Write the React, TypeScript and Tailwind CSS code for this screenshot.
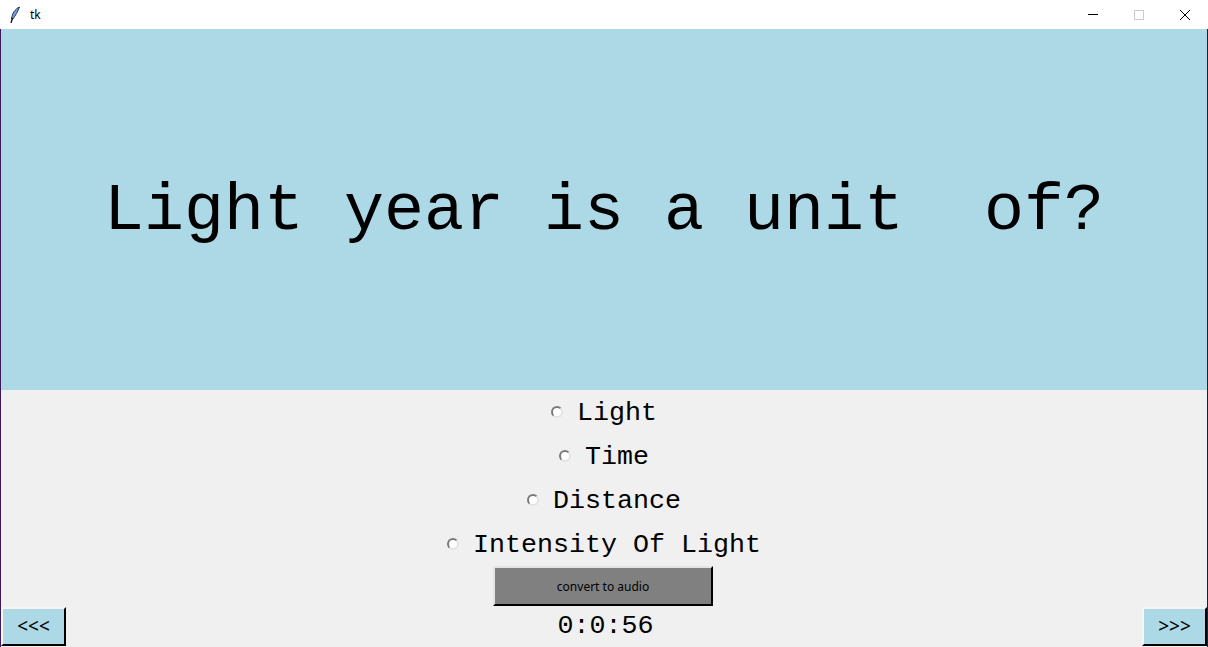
import React from 'react'

const mono = { fontFamily: '"Liberation Mono", "Courier New", monospace' }
const ui = { fontFamily: '"Noto Sans", Arial, sans-serif' }

function Radio() {
  return (
    <span className="inline-block w-[12px] h-[12px] rounded-full bg-white border-2 border-t-[#7a7a7a] border-l-[#7a7a7a] border-r-[#e3e3e3] border-b-[#e3e3e3]" />
  )
}

function Option({ label }: { label: string }) {
  return (
    <div className="h-[44px] flex items-center justify-center gap-[14px]">
      <Radio />
      <span className="text-[26.67px] text-black leading-none mt-[2px]" style={mono}>
        {label}
      </span>
    </div>
  )
}

export default function App() {
  const options = ['Light', 'Time', 'Distance', 'Intensity Of Light']
  return (
    <div className="w-[1208px] h-[647px] flex flex-col overflow-hidden bg-[#f0f0f0]">
      {/* title bar */}
      <div className="h-[29px] bg-white flex items-center shrink-0">
        <svg width="12" height="18" viewBox="0 0 12 18" className="ml-[9px]">
          <path d="M10.5 1 C6 3 3 7.5 2.5 13 L4 13 C6 10 9 5.5 10.5 1 Z" fill="#6fa0dc" stroke="#1a2a4a" strokeWidth="0.9" />
          <path d="M3.5 12 L2 17" stroke="#111" strokeWidth="1.3" />
        </svg>
        <span className="ml-[9px] text-[12px] text-black" style={ui}>
          tk
        </span>
        <div className="ml-auto flex items-center h-full">
          <div className="w-[46px] h-full flex items-center justify-center">
            <div className="w-[10px] h-px bg-black" />
          </div>
          <div className="w-[46px] h-full flex items-center justify-center">
            <div className="w-[10px] h-[10px] border border-[#cccccc]" />
          </div>
          <div className="w-[46px] h-full flex items-center justify-center">
            <svg width="12" height="12" viewBox="0 0 12 12">
              <path d="M1 1 L11 11 M11 1 L1 11" stroke="#000" strokeWidth="1" />
            </svg>
          </div>
        </div>
      </div>

      {/* window body */}
      <div className="flex-1 flex flex-col border-l border-l-[#3b1a5a] border-r border-r-[#1f1f2a]">
        <div className="h-[361px] bg-[#add8e6] flex items-center justify-center shrink-0">
          <span className="text-[66.67px] text-black leading-none whitespace-pre mt-[4px]" style={mono}>
            Light year is a unit  of?
          </span>
        </div>

        <div className="flex-1 flex flex-col">
          {options.map((o) => (
            <Option key={o} label={o} />
          ))}

          <div className="flex justify-center">
            <button
              className="w-[220px] h-[40px] bg-[#808080] text-[12px] text-black border-2 border-t-[#e3e3e3] border-l-[#e3e3e3] border-r-[#000] border-b-[#000] ml-[-2px] pt-[2px]"
              style={ui}
            >
              convert to audio
            </button>
          </div>

          <div className="flex-1 flex items-end justify-between">
            <button
              className="w-[65px] h-[39px] bg-[#add8e6] text-[19px] text-black border-2 border-t-[#f5f5f5] border-l-[#f5f5f5] border-r-[#000] border-b-[#000] mb-px"
              style={ui}
            >
              &lt;&lt;&lt;
            </button>
            <span className="text-[26.67px] text-black leading-none mb-[7px] ml-[3px]" style={mono}>
              0:0:56
            </span>
            <button
              className="w-[65px] h-[39px] bg-[#add8e6] text-[19px] text-black border-2 border-t-[#f5f5f5] border-l-[#f5f5f5] border-r-[#000] border-b-[#000] mb-px"
              style={ui}
            >
              &gt;&gt;&gt;
            </button>
          </div>
        </div>
      </div>
    </div>
  )
}
